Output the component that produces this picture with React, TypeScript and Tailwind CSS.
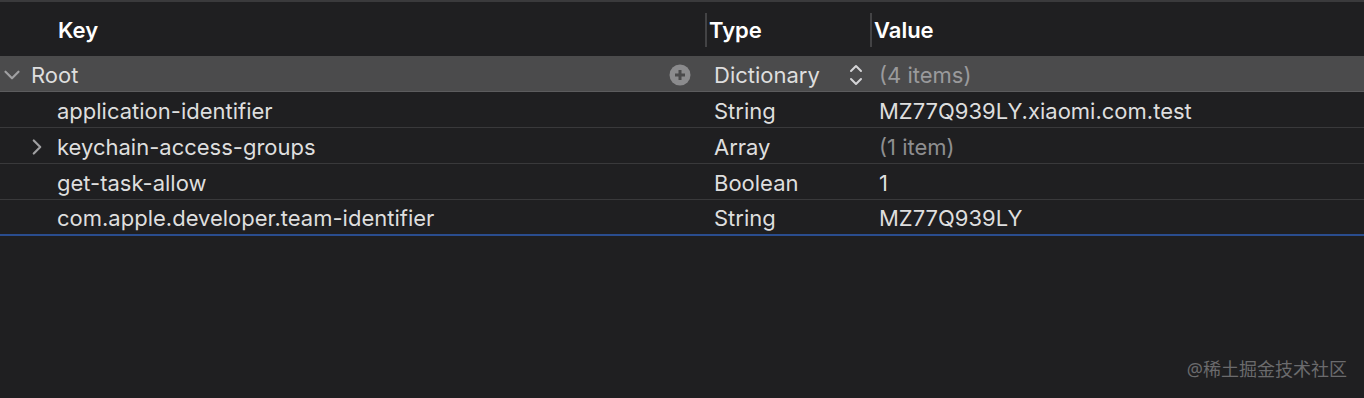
import { ChevronDown, ChevronRight } from 'lucide-react'

type Row = {
  key: string
  type: string
  value: string
  muted?: boolean
  expandable?: boolean
}

const rows: Row[] = [
  { key: 'application-identifier', type: 'String', value: 'MZ77Q939LY.xiaomi.com.test' },
  { key: 'keychain-access-groups', type: 'Array', value: '(1 item)', muted: true, expandable: true },
  { key: 'get-task-allow', type: 'Boolean', value: '1' },
  { key: 'com.apple.developer.team-identifier', type: 'String', value: 'MZ77Q939LY' },
]

function PlusCircle() {
  return (
    <svg width="22" height="22" viewBox="0 0 22 22">
      <circle cx="11" cy="11" r="10.5" fill="#8b8b8d" />
      <path d="M11 6v10M6 11h10" stroke="#4a4a4b" strokeWidth="3" />
    </svg>
  )
}

function UpDown() {
  return (
    <svg width="14" height="24" viewBox="0 0 14 24" fill="none" stroke="#d4d4d6" strokeWidth="2" strokeLinecap="round" strokeLinejoin="round">
      <path d="M2 8l5-5 5 5" />
      <path d="M2 16l5 5 5-5" />
    </svg>
  )
}

export default function App() {
  return (
    <div
      className="relative h-[398px] w-full overflow-hidden bg-[#1f1f21] text-[22px] text-[#dedede]"
      style={{ fontFamily: 'Inter, "Noto Sans", sans-serif' }}
    >
      <div className="h-[2px] bg-[#3a3a3c]" />

      {/* header */}
      <div className="flex h-[54px] items-center pt-[2px] font-semibold text-white">
        <div className="w-[705px] pl-[58px]">Key</div>
        <div className="flex w-[165px] items-center">
          <div className="h-[34px] w-[2px] bg-[#434345]" />
          <span className="pl-[2px]">Type</span>
        </div>
        <div className="flex flex-1 items-center">
          <div className="h-[34px] w-[2px] bg-[#434345]" />
          <span className="pl-[2px]">Value</span>
        </div>
      </div>

      {/* root row */}
      <div className="flex h-[36px] items-center border-b border-[#5c5c5e] bg-[#4b4b4c] pt-[3px]">
        <div className="flex w-[705px] items-center">
          <ChevronDown className="-ml-[1px] h-[26px] w-[26px] text-[#a0a0a2]" strokeWidth={2} />
          <span className="ml-[6px] flex-1">Root</span>
          <span className="mr-[14px] flex">
            <PlusCircle />
          </span>
        </div>
        <div className="flex w-[165px] items-center pl-[9px]">
          <span className="flex-1">Dictionary</span>
          <span className="mr-[7px] flex">
            <UpDown />
          </span>
        </div>
        <div className="flex-1 pl-[9px] text-[#9a9a9c]">(4 items)</div>
      </div>

      {rows.map((r, i) => (
        <div
          key={r.key}
          className={
            i === rows.length - 1
              ? 'flex h-[36px] items-center border-b-2 border-[#2a4d8f] pt-[3px]'
              : 'flex h-[36px] items-center border-b border-[#39393b] pt-[3px]'
          }
        >
          <div className="flex w-[705px] items-center">
            <span className="flex w-[57px] justify-end pr-[7px]">
              {r.expandable && <ChevronRight className="h-[26px] w-[26px] text-[#a0a0a2]" strokeWidth={2} />}
            </span>
            <span>{r.key}</span>
          </div>
          <div className="w-[165px] pl-[9px]">{r.type}</div>
          <div className={r.muted ? 'flex-1 pl-[9px] text-[#8e8e90]' : 'flex-1 pl-[9px]'}>{r.value}</div>
        </div>
      ))}

      <div
        className="absolute bottom-[15px] right-[17px] text-[18px] text-[#6b6b6d]"
        style={{ fontFamily: '"Noto Sans", "Noto Sans CJK SC", sans-serif' }}
      >
        @稀土掘金技术社区
      </div>
    </div>
  )
}
